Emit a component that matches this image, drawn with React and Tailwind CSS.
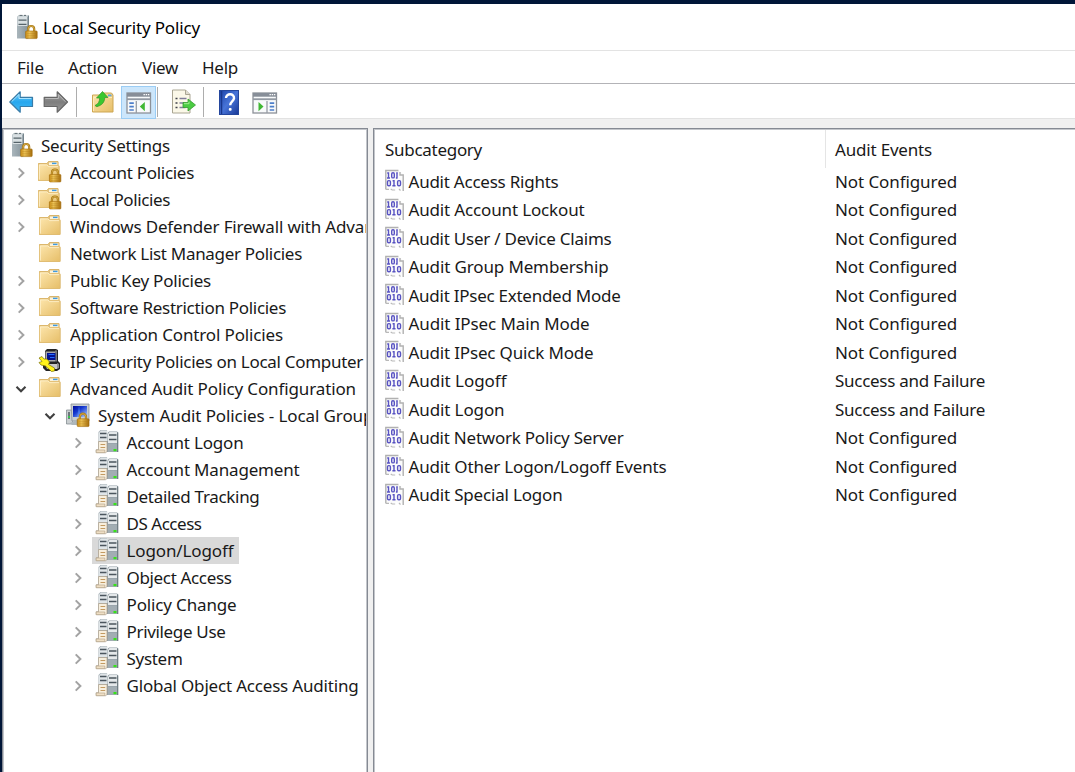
import { useLayoutEffect, useRef, useState } from "react";

// Label whose tracking is adjusted so that its text spans exactly `w` pixels.
function Label({ children, w, className = "" }) {
  const ref = useRef(null);
  const [tracking, setTracking] = useState(0);
  useLayoutEffect(() => {
    const natural = ref.current.getBoundingClientRect().width;
    setTracking((w - natural) / children.length);
  }, [w, children]);
  return (
    <span ref={ref} className={`inline-block shrink-0 whitespace-pre ${className}`} style={{ letterSpacing: `${tracking}px` }}>
      {children}
    </span>
  );
}

function Gradients() {
  return (
    <svg className="absolute h-0 w-0" aria-hidden="true">
      <defs>
        <linearGradient id="folder" x1="0" y1="0" x2="1" y2="1">
          <stop offset="0" stopColor="#fde6ad" /><stop offset="1" stopColor="#e6be68" />
        </linearGradient>
        <linearGradient id="lock" x1="0" y1="0" x2="1" y2="0">
          <stop offset="0" stopColor="#c78a12" /><stop offset=".35" stopColor="#f0c75a" /><stop offset="1" stopColor="#a56d0c" />
        </linearGradient>
        <linearGradient id="tower" x1="0" y1="0" x2="1" y2="0">
          <stop offset="0" stopColor="#aab6bc" /><stop offset="1" stopColor="#84929a" />
        </linearGradient>
        <linearGradient id="blue" x1="0" y1="0" x2="0" y2="1">
          <stop offset="0" stopColor="#72ccf8" /><stop offset=".5" stopColor="#27a7ee" /><stop offset="1" stopColor="#46baf5" />
        </linearGradient>
        <linearGradient id="gray" x1="0" y1="0" x2="0" y2="1">
          <stop offset="0" stopColor="#a5a5a5" /><stop offset=".5" stopColor="#7e7e7e" /><stop offset="1" stopColor="#999" />
        </linearGradient>
        <linearGradient id="help" x1="0" y1="0" x2="1" y2="1">
          <stop offset="0" stopColor="#1c43a8" /><stop offset=".5" stopColor="#4774d8" /><stop offset="1" stopColor="#173795" />
        </linearGradient>
        <linearGradient id="screen" x1="0" y1="0" x2="1" y2="1">
          <stop offset="0" stopColor="#000a98" /><stop offset=".4" stopColor="#1539cf" /><stop offset="1" stopColor="#b4d2ff" />
        </linearGradient>
      </defs>
    </svg>
  );
}

function Padlock({ x, y, s = 1 }) {
  return (
    <g transform={`translate(${x} ${y}) scale(${s})`}>
      <path d="M3 7V4a3 3 0 0 1 6 0v3" fill="none" stroke="#a87815" strokeWidth="2.2" />
      <path d="M3 7V4a3 3 0 0 1 6 0v3" fill="none" stroke="#e5bd58" strokeWidth=".7" />
      <rect x=".4" y="6" width="11.6" height="7.6" rx=".8" fill="url(#lock)" stroke="#a36b0a" strokeWidth=".6" />
      <path d="M2 8.4h8.5M2 10.3h8.5M2 12.1h8.5" stroke="#a97310" strokeWidth=".6" opacity=".6" />
    </g>
  );
}

function ServerLock({ className = "" }) {
  return (
    <svg className={`shrink-0 ${className}`} width="22" height="26" viewBox="0 0 22 26">
      <path d="M1 3 3 1h10v22.5l-1 1H1z" fill="url(#tower)" />
      <path d="M1 3 3 1h10l-1.5 2z" fill="#cdd5d8" />
      <rect x="1.5" y="3" width="9.8" height="9" fill="#d9e0e3" />
      <path d="M2.5 6.2h8M2.5 10.4h8" stroke="#56636a" strokeWidth="1.3" />
      <path d="M3.5 1.4h3M8 1.4h2" stroke="#5d6a70" />
      <path d="M12.4 2v21" stroke="#74828a" />
      <Padlock x="9.2" y="11" />
    </svg>
  );
}

function Folder({ locked }) {
  return (
    <svg className="shrink-0" width="26" height="24" viewBox="0 0 26 24">
      <path d="M1.5 20.5v-17h8.5l1.5-2h9.5v4l1 1v14z" fill="#eac77c" stroke="#d9b468" />
      <path d="M11.5 5V2h9.3v3" fill="#fbf3dc" stroke="#dcb972" strokeWidth=".8" />
      <rect x="15" y="2.7" width="4.5" height="1.4" fill="#3f9be2" />
      <path d="M1.5 4h8.7l1.8 1.7h10v14.8h-20.5z" fill="url(#folder)" stroke="#dfbd74" strokeWidth=".8" />
      <path d="M2.4 19.5V4.9h7.4l1.8 1.7h9.4" fill="none" stroke="#fff2cf" strokeWidth=".8" />
      {locked && <Padlock x="12" y="8.5" s=".99" />}
    </svg>
  );
}

function IpKey() {
  return (
    <svg className="shrink-0" width="26" height="26" viewBox="0 0 26 26">
      <path d="M7 3 9 1h9l2 1v11l2 2v6l-3 2H8l-3-3v-4l2-2z" fill="#242424" />
      <path d="M7.5 3.5h9.5v10H7.5z" fill="#a8a8a8" />
      <path d="M17 2.5h2v11h-2z" fill="#777" />
      <path d="M7 16h12v5H9z" fill="#c8c8c8" />
      <path d="M19 15l2 1v4l-2 1z" fill="#8f8f8f" />
      <path d="M9 5h8.5v7H9z" fill="#04128e" />
      <path d="M10.5 6h6v1h-6zM12 9h4.5v1H12z" fill="#246aff" />
      <path d="M1 10 4 8.5l2 2.5h3l2.5 3-1 2.5 6 3.5v3l-3 .5-6-5.5-4.5-1L1 14.5l3-1z" fill="#fff21a" stroke="#787000" strokeWidth=".7" />
    </svg>
  );
}

function AuditComputer() {
  return (
    <svg className="shrink-0" width="26" height="26" viewBox="0 0 26 26">
      <path d="M1.5 7h6v14h-6z" fill="#c9ced0" stroke="#788286" strokeWidth=".7" />
      <path d="M3 9h2v7H3z" fill="#6c777b" /><path d="M3 13h2v2H3z" fill="#35c74d" />
      <path d="M6 1h18v17H7z" fill="#c8ced1" stroke="#899195" strokeWidth=".8" />
      <path d="M8 3h14v11H8z" fill="url(#screen)" />
      <path d="M14 3l2 11h-4z" fill="#6ba4ff" opacity=".45" />
      <path d="M5 20l6-3h6v5H7z" fill="#aeb7bb" />
      <Padlock x="11.8" y="9.7" s="1.02" />
    </svg>
  );
}

function AuditServer() {
  return (
    <svg className="shrink-0" width="26" height="26" viewBox="0 0 26 26">
      <path d="M3.5 3 5.5 1H12v21H3.5z" fill="#a7b1b7" />
      <path d="M12 4.5 14 2.5h8l1.2 1V23H12z" fill="#929ea5" />
      <path d="M4 3.5 6 1.5h6.5V12H4z" fill="#dfe5e8" />
      <path d="M13 5 14.5 3h7.5v11h-9z" fill="#e4e8ea" />
      <path d="M5 4.5h6.5M5 8.5h6.5M14 6h7.5M14 10.5h7.5" stroke="#4b565e" strokeWidth="1.4" />
      <path d="M13 14.5h9V23h-9z" fill="#a2adb3" />
      <path d="M22.7 3.5V23" stroke="#69757c" />
      <path d="M18.5 20h3v2.2h-3z" fill="#35e316" />
      <path d="M3.5 12.5h8.5v10l-1.5 1.2H1.2v-3h2.3z" fill="#f8efdd" stroke="#a99c88" strokeWidth=".7" />
      <path d="M5.5 15.5h4.7M5.5 18.5h4.7" stroke="#c39a61" />
      <path d="M1.2 21h8.6v2.6H1.2z" fill="#efdfc5" stroke="#ae9d84" strokeWidth=".6" />
    </svg>
  );
}

function BinaryDoc() {
  return (
    <svg className="shrink-0" width="20" height="24" viewBox="0 0 20 24">
      <path d="M.8 1h12.8l4.6 4.5v16l-3-2-2 .6-2-1-3 1.7-2.2-1.2L1 20z" fill="#fbfbfb" />
      <path d="M.8 20.5V1.5h12.6M15 3v3h3.2v16" fill="none" stroke="#b1b1b1" strokeWidth="1.4" />
      <path d="M1 20.3h3M5.7 20l1.5 1h3M14 20l1.5 1.5" fill="none" stroke="#b9b9b9" strokeWidth="1.2" />
      <g fill="none" stroke="#5853c2" strokeWidth="1.4">
        <path d="M2.2 4h1.3v5M2 9h3M11.2 4h1.6M12 4v5M10.9 9h1.7" />
        <rect x="6.7" y="3.7" width="2.6" height="5.2" rx="1.2" />
        <rect x="2.5" y="11.6" width="2.9" height="5.2" rx="1.2" />
        <path d="M7.6 11.7H9v5M7.4 16.7h3.1" />
        <rect x="12.6" y="11.6" width="2.9" height="5.2" rx="1.2" />
      </g>
    </svg>
  );
}

function Chevron({ open }) {
  return (
    <svg className="shrink-0" width="12" height="12" viewBox="0 0 12 12">
      {open ? (
        <path d="M1.5 3.7 6 8.2l4.5-4.5" fill="none" stroke="#404040" strokeWidth="2.1" />
      ) : (
        <path d="M3.7 1.4 8.4 6l-4.7 4.6" fill="none" stroke="#a3a3a3" strokeWidth="2" />
      )}
    </svg>
  );
}

function ArrowIcon({ right }) {
  return (
    <svg className="shrink-0" width="26" height="24" viewBox="0 0 26 24">
      <path
        d={right ? "M24.5 12 14.2 1.8v5.5H1.2v9.2h13v5.7z" : "M.8 12 11.2 1.8v5.5h12.3v9.2H11.2v5.7z"}
        fill={right ? "url(#gray)" : "url(#blue)"}
        stroke={right ? "#666" : "#397ca8"}
        strokeWidth="1.2"
        strokeLinejoin="round"
      />
      <path
        d={right ? "M2.4 8.5h13V4.6l7.1 7.2" : "M2.6 11.7 10 4.5v4h12.3"}
        fill="none" stroke={right ? "#b8b8b8" : "#a7e3ff"} strokeWidth="1"
      />
    </svg>
  );
}

function UpFolderIcon() {
  return (
    <svg width="24" height="24" viewBox="0 0 24 24">
      <path d="M1.5 22V5h9l2-2h8l1.5 2v17z" fill="url(#folder)" stroke="#cda653" />
      <rect x="17" y="4.5" width="3.5" height="1.8" fill="#5fa6df" />
      <path d="M2.5 21V7.5h18.5" fill="none" stroke="#ffebb7" />
      <path d="M4 15.5c3.5-1.5 4.5-4 4.7-7.5H5.5l6-6.5L17 7.5h-3.2c-.3 5-2.8 7.7-8 9.2z" fill="#3ac82f" stroke="#309424" strokeWidth=".7" />
    </svg>
  );
}

function PaneIcon({ mirrored }) {
  return (
    <svg width="26" height="22" viewBox="0 0 26 22">
      <rect x="1" y="1" width="23.5" height="20" fill="#f8fafb" stroke="#8c9198" strokeWidth="1.3" />
      <rect x="1" y="1" width="23.5" height="3.7" fill="#878e98" />
      <path d="M1 7.2h23.5" stroke="#9299a2" strokeWidth="1.8" />
      <path d="M17.5 2.7h1.4M19.7 2.7h1.4M21.9 2.7h1.4" stroke="#fff" strokeWidth="1.2" />
      {mirrored ? (
        <>
          <path d="M15 9v12" stroke="#969ca5" strokeWidth="1.3" />
          <path d="M17.7 11.2h4.5M17.7 14.6h4.5M17.7 18h4.5" stroke="#4d7fca" strokeWidth="1.7" />
          <path d="m6.5 10 5 4.6-5 4.6z" fill="#40b834" />
        </>
      ) : (
        <>
          <path d="M10.3 9v12" stroke="#969ca5" strokeWidth="1.3" />
          <path d="M3.3 11.2h4.5M3.3 14.6h4.5M3.3 18h4.5" stroke="#4d7fca" strokeWidth="1.7" />
          <path d="m18.8 10-5 4.6 5 4.6z" fill="#40b834" />
        </>
      )}
    </svg>
  );
}

function ExportIcon() {
  return (
    <svg width="26" height="26" viewBox="0 0 26 26">
      <path d="M1.5 1h13l4.5 4.5V24H1.5z" fill="#fbf8e8" stroke="#aaa693" />
      <path d="M14.5 1v4.5H19" fill="#dedbcf" stroke="#aaa693" />
      <path d="M4.5 9.5h2M4.5 14h2M4.5 18.5h2" stroke="#40404a" strokeWidth="1.5" />
      <path d="M8.5 9.5h7M8.5 14h4.5M8.5 18.5h6" stroke="#807d9a" strokeWidth="1.4" />
      <path d="M12 13.5h5V10l7.5 6-7.5 6v-3.5h-5z" fill="#4bcc42" stroke="#369a31" strokeWidth=".8" />
      <path d="M13 14.7h5v-2" stroke="#a0ee8e" fill="none" />
    </svg>
  );
}

function HelpIcon() {
  return (
    <svg width="20" height="25" viewBox="0 0 20 25">
      <rect x=".5" y=".5" width="19" height="24" fill="url(#help)" stroke="#24469d" />
      <path d="M2.5 1v23" stroke="#18378c" strokeWidth="1.5" />
      <path d="M7 8c0-5 8.5-5 8 .3-.3 3-3.8 3.4-3.8 7" fill="none" stroke="#fff" strokeWidth="2.4" />
      <rect x="9.8" y="18" width="2.8" height="2.8" rx="1" fill="#fff" />
    </svg>
  );
}

const TREE = [
  { text: "Account Policies", w: 124, icon: "locked", chev: "closed" },
  { text: "Local Policies", w: 100, icon: "locked", chev: "closed" },
  { text: "Windows Defender Firewall with Advanced Security", w: 399, icon: "folder", chev: "closed" },
  { text: "Network List Manager Policies", w: 232, icon: "folder" },
  { text: "Public Key Policies", w: 141, icon: "folder", chev: "closed" },
  { text: "Software Restriction Policies", w: 216, icon: "folder", chev: "closed" },
  { text: "Application Control Policies", w: 213, icon: "folder", chev: "closed" },
  { text: "IP Security Policies on Local Computer", w: 293, icon: "ip", chev: "closed" },
  { text: "Advanced Audit Policy Configuration", w: 286, icon: "folder", chev: "open" },
];

const CATEGORIES = [
  ["Account Logon", 117],
  ["Account Management", 173],
  ["Detailed Tracking", 133],
  ["DS Access", 75],
  ["Logon/Logoff", 107],
  ["Object Access", 105],
  ["Policy Change", 110],
  ["Privilege Use", 99],
  ["System", 56],
  ["Global Object Access Auditing", 232],
];

const NOT = ["Not Configured", 122];
const BOTH = ["Success and Failure", 150];
const EVENTS = [
  ["Audit Access Rights", 150, NOT],
  ["Audit Account Lockout", 176, NOT],
  ["Audit User / Device Claims", 203, NOT],
  ["Audit Group Membership", 200, NOT],
  ["Audit IPsec Extended Mode", 212, NOT],
  ["Audit IPsec Main Mode", 181, NOT],
  ["Audit IPsec Quick Mode", 185, NOT],
  ["Audit Logoff", 98, BOTH],
  ["Audit Logon", 96, BOTH],
  ["Audit Network Policy Server", 215, NOT],
  ["Audit Other Logon/Logoff Events", 258, NOT],
  ["Audit Special Logon", 154, NOT],
];

function Tree() {
  return (
    <div className="flex w-[366px] shrink-0 border border-b-0 border-[#858a93]">
      <div className="flex min-w-0 flex-1 flex-col overflow-hidden border border-b-0 border-[#c3c6cb] bg-white pt-[2px]">
        <div className="flex h-[27px] shrink-0 items-center pl-[7px]">
          <ServerLock className="mr-[8px] mb-[2px]" />
          <Label w={129}>Security Settings</Label>
        </div>
        {TREE.map((n) => (
          <div key={n.text} className="flex h-[27px] shrink-0 items-center pl-[11px]">
            <div className="flex w-[22px] shrink-0 pt-px">{n.chev && <Chevron open={n.chev === "open"} />}</div>
            <div className={`flex shrink-0 pb-[1px] ${n.icon === "locked" ? "w-[33px]" : "w-[32px] translate-x-px mr-px"}`}>
              {n.icon === "ip" ? <IpKey /> : <Folder locked={n.icon === "locked"} />}
            </div>
            <div className="min-w-0 flex-1 overflow-hidden whitespace-nowrap"><Label w={n.w}>{n.text}</Label></div>
          </div>
        ))}
        <div className="flex h-[27px] shrink-0 items-center pl-[40px]">
          <div className="flex w-[21px] shrink-0 pt-px"><Chevron open /></div>
          <div className="flex w-[33px] shrink-0"><AuditComputer /></div>
          <div className="min-w-0 flex-1 overflow-hidden whitespace-nowrap"><Label w={381}>System Audit Policies - Local Group Policy Object</Label></div>
        </div>
        {CATEGORIES.map(([text, w]) => (
          <div key={text} className="flex h-[27px] shrink-0 items-center pl-[68px]">
            <div className="flex w-[20px] shrink-0 pt-px"><Chevron /></div>
            <div className={`flex h-[27px] items-center pr-[5px] pl-[3px] ${text === "Logon/Logoff" ? "bg-[#d9d9d9]" : ""}`}>
              <div className="flex w-[31.5px] shrink-0 pb-px"><AuditServer /></div>
              <Label w={w}>{text}</Label>
            </div>
          </div>
        ))}
      </div>
    </div>
  );
}

function EventList() {
  return (
    <div className="ml-[5px] flex min-w-0 flex-1 border-t border-l border-[#858a93]">
      <div className="flex min-w-0 flex-1 flex-col border-t border-l border-[#c3c6cb] bg-white">
        <div className="flex h-[37.5px] shrink-0">
          <div className="flex w-[451px] items-center border-r border-[#e5e5e5] pt-[3px] pl-[10px]"><Label w={97}>Subcategory</Label></div>
          <div className="flex items-center pt-[3px] pl-[9px]"><Label w={97}>Audit Events</Label></div>
        </div>
        {EVENTS.map(([text, w, value]) => (
          <div key={text} className="flex h-[28.5px] shrink-0 items-center">
            <div className="flex w-[460px] items-center pl-[10px]">
              <div className="flex w-[23.5px] shrink-0 pb-px"><BinaryDoc /></div>
              <Label w={w}>{text}</Label>
            </div>
            <Label w={value[1]}>{value[0]}</Label>
          </div>
        ))}
      </div>
    </div>
  );
}

export default function App() {
  return (
    <div className="flex h-[772px] w-[1075px] flex-col overflow-hidden border-t-4 border-l-2 border-[#001638] bg-[#f0f0f0] font-['Noto_Sans','Open_Sans',sans-serif] text-[17px] leading-[26px] text-[#191919]">
      <Gradients />
      <div className="flex h-[47px] shrink-0 items-center border-b border-[#e3e3e3] bg-white pl-[14px]">
        <ServerLock />
        <Label w={157} className="ml-[5px] pt-px text-black">Local Security Policy</Label>
      </div>
      <div className="flex h-[33px] shrink-0 items-center gap-[25px] border-b border-[#b3b3b7] bg-white pt-[2px] pl-[15px]">
        <Label w={27}>File</Label>
        <Label w={49} className="-ml-px">Action</Label>
        <Label w={36}>View</Label>
        <Label w={36} className="-ml-px">Help</Label>
      </div>
      <div className="flex h-[35px] shrink-0 items-center border-b border-[#e2e2e2] bg-white pt-[2px] pl-[7px]">
        <ArrowIcon />
        <div className="ml-[8px]"><ArrowIcon right /></div>
        <div className="ml-[7px] h-[30px] w-px bg-[#adadad]" />
        <div className="ml-[14px]"><UpFolderIcon /></div>
        <div className="ml-[6px] flex h-[33px] w-[35px] items-center justify-center border border-[#9bcdf5] bg-[#cce6fb] pt-[2px]"><PaneIcon /></div>
        <div className="ml-px h-[30px] w-px bg-[#adadad]" />
        <div className="ml-[13px]"><ExportIcon /></div>
        <div className="ml-[6px] h-[30px] w-px bg-[#adadad]" />
        <div className="ml-[15px]"><HelpIcon /></div>
        <div className="ml-[13px] pt-[2px]"><PaneIcon mirrored /></div>
      </div>
      <div className="flex min-h-0 flex-1 pt-[9px]">
        <Tree />
        <EventList />
      </div>
    </div>
  );
}
